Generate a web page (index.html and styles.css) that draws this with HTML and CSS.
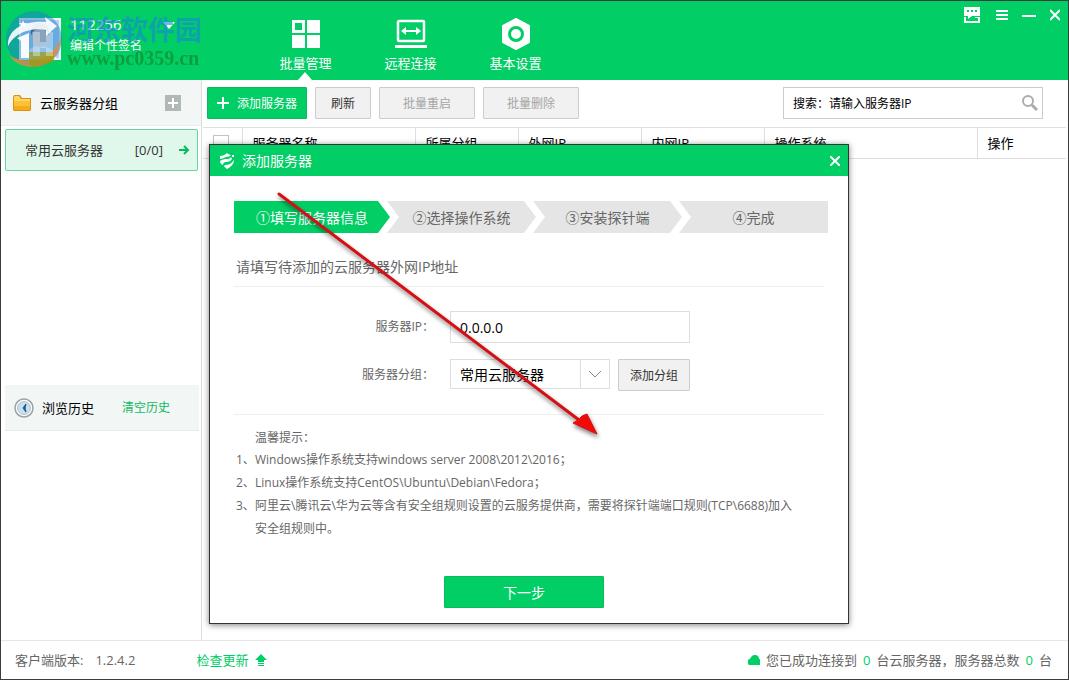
FILE: index.html
```
<!DOCTYPE html>
<html lang="zh-CN">
<head>
  <meta charset="UTF-8" />
  <meta name="viewport" content="width=device-width, initial-scale=1.0" />
  <title>批量管理</title>
  <link rel="stylesheet" href="styles.css">
</head>
<body>
  <div class="app">
    <header class="topbar">
      <div class="user">
        <svg class="avatar" viewBox="0 0 42 42">
          <rect width="42" height="42" fill="#f4f8fb"/>
          <rect x="2" y="2" width="38" height="38" fill="#b9d6ec"/>
          <path d="M6 40c2-9 8-12 15-12s14 3 16 12z" fill="#fff"/>
          <ellipse cx="21" cy="19" rx="8" ry="10" fill="#f2c9a8"/>
          <path d="M12 18c-1-9 3-13 9-13s11 4 9 13c-2-5-4-7-9-7s-8 2-9 7z" fill="#5b4a4a"/>
        </svg>
        <div class="user-text">
          <div class="user-name">112256</div>
          <div class="user-sign">编辑个性签名</div>
        </div>
        <button type="button" class="icon-btn user-more" aria-label="更多">
          <svg width="12" height="8" viewBox="0 0 12 8"><path d="M0 0h12L6 7z" fill="#fff"/></svg>
        </button>
      </div>

      <nav class="nav">
        <a href="#" class="nav-item active">
          <svg width="28" height="28" viewBox="0 0 28 28" fill="#fff">
            <path fill-rule="evenodd" d="M0 0h13v13H0zM3 3v7h7V3z"/>
            <path d="M15 0h13v13H15zM0 15h13v13H0zM15 15h13v13H15z"/>
          </svg>
          <span>批量管理</span>
        </a>
        <a href="#" class="nav-item">
          <svg width="32" height="28" viewBox="0 0 32 28" fill="#fff">
            <rect x="3" y="1" width="26" height="20" rx="1" fill="none" stroke="#fff" stroke-width="2.500"/>
            <path d="M6 11l5-4v3h10V7l5 4-5 4v-3H11v3z"/>
            <path d="M0 25h32v3H0z"/>
          </svg>
          <span>远程连接</span>
        </a>
        <a href="#" class="nav-item">
          <svg width="28" height="32" viewBox="0 0 28 32">
            <path d="M14 1l13 7v16l-13 7-13-7V8z" fill="#fff" stroke="#fff" stroke-width="2" stroke-linejoin="round"/>
            <circle cx="14" cy="16" r="6.500" fill="none" stroke="#01ce65" stroke-width="3"/>
          </svg>
          <span>基本设置</span>
        </a>
      </nav>

      <div class="window-tools">
        <button type="button" class="icon-btn" aria-label="反馈">
          <svg width="16" height="16" viewBox="0 0 16 16" fill="#fff">
            <path fill-rule="evenodd" d="M0 0h16v9H8l-4 3V9H0zM3 3v2h2V3zM7 3v2h2V3zM11 3v2h2V3z"/>
            <path d="M0 10h2v4h12v-3h-3v-1h5v6H0z"/>
          </svg>
        </button>
        <button type="button" class="icon-btn" aria-label="菜单">
          <svg width="12" height="12" viewBox="0 0 12 12" fill="#fff"><path d="M0 1h12v2H0zM0 5h12v2H0zM0 9h12v2H0z"/></svg>
        </button>
        <button type="button" class="icon-btn" aria-label="最小化">
          <svg width="14" height="12" viewBox="0 0 14 12" fill="#fff"><path d="M0 6h14v2H0z"/></svg>
        </button>
        <button type="button" class="icon-btn" aria-label="关闭">
          <svg width="10" height="12" viewBox="0 0 10 12"><path d="M0 1l10 10M10 1L0 11" stroke="#fff" stroke-width="2"/></svg>
        </button>
      </div>
    </header>

    <div class="main">
      <aside class="sidebar">
        <section class="groups">
          <div class="side-head">
            <svg width="18" height="16" viewBox="0 0 18 16">
              <path d="M0 2l1-2h6l2 3h9v12l-1 1H1l-1-1z" fill="#e0900f"/>
              <path d="M1 4V2l1-1h4l2 3h9v2H1z" fill="#ffd765"/>
              <path d="M1 6h16v5H1z" fill="#fcc235"/>
              <path d="M1 11h16v4H1z" fill="#f5ab1a"/>
            </svg>
            <span class="side-title">云服务器分组</span>
            <button type="button" class="icon-btn" aria-label="新建分组">
              <svg width="16" height="16" viewBox="0 0 16 16"><path fill="#b1b9b6" d="M0 0h16v16H0z"/><path d="M8 3v10M3 8h10" stroke="#fff" stroke-width="2"/></svg>
            </button>
          </div>
          <a href="#" class="group-item">
            <span class="group-name">常用云服务器</span>
            <span>[0/0]</span>
            <svg width="11" height="10" viewBox="0 0 11 10"><path d="M0 5h9M5 1l4 4-4 4" fill="none" stroke="#02bd5e" stroke-width="2"/></svg>
          </a>
        </section>
        <section class="history">
          <div class="history-head">
            <svg width="20" height="20" viewBox="0 0 20 20">
              <circle cx="10" cy="10" r="9" fill="#fff" stroke="#9aa2a5" stroke-width="1.500"/>
              <circle cx="10" cy="10" r="6.500" fill="#c5e0f0" stroke="#b2c2ca"/>
              <path d="M12 6l-3 4 3 4-1-4z" fill="#24577c" stroke="#24577c"/>
            </svg>
            <span>浏览历史</span>
            <a href="#" class="history-clear">清空历史</a>
          </div>
        </section>
      </aside>

      <main class="content">
        <div class="toolbar">
          <button type="button" class="btn btn-primary btn-add">
            <svg width="12" height="12" viewBox="0 0 12 12"><path d="M6 0v12M0 6h12" stroke="#fff" stroke-width="2"/></svg>
            添加服务器
          </button>
          <button type="button" class="btn btn-small">刷新</button>
          <button type="button" class="btn btn-wide" disabled>批量重启</button>
          <button type="button" class="btn btn-wide" disabled>批量删除</button>
          <div class="search">
            <input type="text" aria-label="搜索" value="搜索：请输入服务器IP">
            <button type="button" class="icon-btn" aria-label="搜索">
              <svg width="16" height="16" viewBox="0 0 16 16" fill="none" stroke="#a9aeac"><circle cx="6" cy="6" r="5" stroke-width="2"/><path d="M10 10l5 5" stroke-width="3"/></svg>
            </button>
          </div>
        </div>
        <table class="servers">
          <thead>
            <tr>
              <th class="col-check"><input type="checkbox" aria-label="全选"></th>
              <th class="col-name">服务器名称</th>
              <th class="col-group">所属分组</th>
              <th class="col-ip">外网IP</th>
              <th class="col-ip">内网IP</th>
              <th class="col-os">操作系统</th>
              <th>操作</th>
            </tr>
          </thead>
        </table>
      </main>
    </div>

    <footer class="statusbar">
      <span class="version-label">客户端版本:</span>
      <span class="version">1.2.4.2</span>
      <a href="#" class="update">检查更新
        <svg width="12" height="12" viewBox="0 0 12 12" fill="#01ce65"><path d="M6 0l6 6H9v2H3V6H0zM3 9h6v1H3zM3 11h6v1H3z"/></svg>
      </a>
      <div class="connected">
        <svg width="12" height="10" viewBox="0 0 12 10"><path d="M3 10a3 3 0 0 1-1-6C3 2 4 0 7 0s4 2 4 4a3 3 0 0 1-1 6z" fill="#01ce65"/></svg>
        <span>您已成功连接到</span>
        <b>0</b>
        <span>台云服务器，服务器总数</span>
        <b>0</b>
        <span>台</span>
      </div>
    </footer>

    <div class="modal" role="dialog" aria-labelledby="modal-title">
      <div class="modal-head">
        <svg width="16" height="16" viewBox="0 0 16 16" fill="#fff">
          <path d="M1 3c3 0 5-1 7-3 1 1 3 2 4 2-1 1-3 2-5 2-3 1-4 2-6 2z"/>
          <path d="M1 8c2-1 3-2 6-2 2 0 4 0 5-2l1 2c-1 2-3 3-6 3-2 0-3 1-3 3C2 11 1 10 1 8z"/>
          <path d="M6 12c4 0 7-2 9-5 0 4-3 7-7 9-1-1-3-2-3-3z"/>
          <path d="M13 2h2v2h-2z"/>
        </svg>
        <h2 id="modal-title">添加服务器</h2>
        <button type="button" class="icon-btn" aria-label="关闭">
          <svg width="10" height="10" viewBox="0 0 10 10"><path d="M0 0l10 10M10 0L0 10" stroke="#fff" stroke-width="2"/></svg>
        </button>
      </div>
      <form class="modal-body">
        <ol class="steps">
          <li class="current">①填写服务器信息</li>
          <li>②选择操作系统</li>
          <li>③安装探针端</li>
          <li>④完成</li>
        </ol>
        <p class="lead">请填写待添加的云服务器外网IP地址</p>
        <div class="fields">
          <div class="field">
            <label for="ip">服务器IP：</label>
            <input type="text" id="ip" value="0.0.0.0">
          </div>
          <div class="field">
            <label for="group">服务器分组：</label>
            <div class="select">
              <select id="group">
                <option>常用云服务器</option>
              </select>
              <svg viewBox="0 0 29 28"><path d="M0 0v28" stroke="#dedede" stroke-width="2"/><path d="M9 11l6 6 6-6" fill="none" stroke="#888"/></svg>
            </div>
            <button type="button" class="btn btn-group">添加分组</button>
          </div>
        </div>
        <div class="tips">
          <p class="tips-title">温馨提示：</p>
          <p><span>1、</span>Windows操作系统支持windows server 2008\2012\2016；</p>
          <p><span>2、</span>Linux操作系统支持CentOS\Ubuntu\Debian\Fedora；</p>
          <p><span>3、</span>阿里云\腾讯云\华为云等含有安全组规则设置的云服务提供商，需要将探针端端口规则(TCP\6688)加入安全组规则中。</p>
        </div>
        <div class="modal-actions">
          <button type="button" class="btn btn-primary btn-next">下一步</button>
        </div>
      </form>
    </div>

    <svg class="pointer" width="330" height="256" viewBox="0 0 330 256">
      <path d="M4 4L304 230" stroke="#d60f14" stroke-width="3" stroke-linecap="round"/>
      <path d="M322 244l-24-11 5-3 4-4 5-2z" fill="#f40808" stroke="#d60f14"/>
    </svg>

    <div class="watermark">
      <svg width="58" height="58" viewBox="0 0 58 58">
        <circle cx="29" cy="29" r="28" fill="#1b7fd0" opacity=".5"/>
        <path d="M28 57c16 0 28-12 28-30-3 12-14 21-28 23-10 1-19-1-24-5 4 7 13 12 24 12z" fill="#ef8a35" opacity=".75"/>
        <path d="M24 42h25v10l-20 5-5-3z" fill="#9a9a10" opacity=".7"/>
        <path d="M3 36C2 19 20 10 41 12l-1-5 12 9-11 10v-6C24 17 9 24 3 36z" fill="#fff" opacity=".9"/>
        <path d="M12 28l12-5v25h-8V31z" fill="#fff" opacity=".95"/>
        <path d="M28 22h7v10h6V22h7v24h-7v-8h-6v8h-7z" fill="#fff" opacity=".35"/>
        <path d="M18 10l1 3h3l-2 2 1 3-3-2-3 2 1-3-2-2h3z" fill="#fff"/>
      </svg>
      <div class="watermark-text">
        <div class="watermark-name">河东软件园</div>
        <div class="watermark-url">www.pc0359.cn</div>
      </div>
    </div>
  </div>
</body>
</html>
```

FILE: styles.css
```
* {
  box-sizing: border-box;
}

body {
  margin: 0;
  font-family: "Open Sans", "Noto Sans CJK SC", sans-serif;
  font-size: 13px;
  line-height: 20px;
  color: #000;
}

a {
  color: inherit;
  text-decoration: none;
}

svg {
  display: block;
  flex: none;
}

button,
input,
select {
  font-family: inherit;
}

.icon-btn {
  padding: 0;
  border: none;
  background: none;
  cursor: pointer;
}

.app {
  position: relative;
  display: flex;
  flex-direction: column;
  height: 100vh;
  border: 1px solid #3c3c3c;
  background: #fff;
  overflow: hidden;
}

/* top bar */
.topbar {
  display: flex;
  flex: none;
  height: 79px;
  background: #01ce65;
  color: #fff;
}

.user {
  display: flex;
  align-items: flex-start;
  width: 252px;
  padding: 17px 0 0 18px;
}

.avatar {
  width: 42px;
  height: 42px;
}

.user-text {
  width: 102px;
  padding-left: 9px;
}

.user-name {
  font-size: 15px;
  line-height: 12px;
}

.user-sign {
  margin-top: 6px;
  font-size: 12px;
}

.user-more {
  margin-top: 4px;
}

.nav {
  display: flex;
}

.nav-item {
  position: relative;
  display: flex;
  flex-direction: column;
  align-items: center;
  justify-content: flex-end;
  width: 105px;
  padding-bottom: 7px;
}

.nav-item svg {
  height: 32px;
  margin-bottom: 3px;
}

.nav-item.active::after {
  content: "";
  position: absolute;
  bottom: 0;
  left: 45px;
  border: 7px solid transparent;
  border-top: none;
  border-bottom: 8px solid #fff;
}

.window-tools {
  display: flex;
  align-items: center;
  gap: 14px;
  height: 28px;
  margin-left: auto;
  padding-right: 8px;
}

.window-tools .icon-btn:first-child {
  margin-right: 2px;
}

/* side bar */
.main {
  display: flex;
  flex: 1;
  min-height: 0;
}

.sidebar {
  display: flex;
  flex-direction: column;
  width: 201px;
  border-right: 1px solid #dcdfde;
}

.groups {
  flex: 6;
}

.side-head {
  display: flex;
  align-items: center;
  height: 46px;
  padding: 0 20px 0 12px;
  background: #f2f6f5;
  border-bottom: 1px solid #eaeeed;
}

.side-title {
  flex: 1;
  padding-left: 9px;
}

.group-item {
  display: flex;
  align-items: center;
  height: 42px;
  margin: 3px 3px 0 4px;
  padding: 0 7px 0 19px;
  border: 1px solid #6bd39d;
  border-radius: 2px;
  background: #e0f8eb;
  color: #333;
}

.group-item svg {
  margin-left: 16px;
}

.group-name {
  flex: 1;
}

.history {
  flex: 5;
  padding: 0 2px 0 4px;
}

.history-head {
  display: flex;
  align-items: center;
  height: 46px;
  padding-left: 9px;
  background: #f2f6f5;
  border-bottom: 1px solid #e6ebe9;
}

.history-head span {
  margin: 0 28px 0 8px;
}

.history-clear {
  font-size: 12px;
  color: #0fba63;
}

/* content */
.content {
  flex: 1;
  min-width: 0;
}

.toolbar {
  display: flex;
  gap: 8px;
  padding: 7px 25px 8px 5px;
}

.btn {
  height: 32px;
  padding: 0;
  border: 1px solid #ccc;
  border-radius: 1px;
  background: #f1f1f1;
  font-size: 12px;
  color: #333;
  cursor: pointer;
}

.btn:disabled {
  color: #a5a5a5;
}

.btn-primary {
  border-color: #0cb95f;
  background: #01ce65;
  color: #fff;
}

.btn-add {
  display: flex;
  align-items: center;
  justify-content: center;
  gap: 8px;
  width: 100px;
}

.btn-small {
  width: 56px;
}

.btn-wide {
  width: 96px;
}

.search {
  display: flex;
  align-items: center;
  width: 260px;
  height: 32px;
  margin-left: auto;
  padding: 0 4px 0 9px;
  border: 1px solid #ccc;
}

.search input {
  flex: 1;
  min-width: 0;
  padding: 0;
  border: none;
  outline: none;
  font-size: 12px;
}

.servers {
  width: calc(100% - 3px);
  margin-left: 1px;
  border-collapse: collapse;
  table-layout: fixed;
}

.servers th {
  height: 31px;
  padding: 0 0 0 10px;
  border: 1px solid #dfdfdf;
  border-width: 1px 0 1px 1px;
  font-weight: normal;
  text-align: left;
}

.servers .col-check {
  width: 39px;
  border-left: none;
}

.servers input {
  display: block;
  appearance: none;
  width: 16px;
  height: 16px;
  margin: 0;
  border: 1px solid #c4c4c4;
  background: #fff;
}

.col-name {
  width: 173px;
}

.col-group {
  width: 103px;
}

.col-ip {
  width: 123px;
}

.col-os {
  width: 213px;
}

/* status bar */
.statusbar {
  display: flex;
  flex: none;
  align-items: center;
  height: 39px;
  padding: 0 16px 0 14px;
  border-top: 1px solid #e6e6e6;
  color: #666;
}

.version {
  width: 101px;
  margin-left: 12px;
}

.update {
  display: flex;
  align-items: center;
  gap: 7px;
  color: #01ce65;
}

.connected {
  display: flex;
  align-items: center;
  gap: 6px;
  margin-left: auto;
}

.connected b {
  font-weight: normal;
  color: #01ce65;
}

/* add server dialog */
.modal {
  position: absolute;
  top: 143px;
  left: 208px;
  width: 640px;
  border: 1px solid #333;
  background: #fff;
  box-shadow: 0 1px 6px rgba(0, 0, 0, 0.5);
}

.modal-head {
  display: flex;
  align-items: center;
  height: 31px;
  padding: 0 8px 0 9px;
  background: #01ce65;
  color: #fff;
}

.modal-head h2 {
  flex: 1;
  margin: 0 0 0 7px;
  font-size: 14px;
  font-weight: normal;
}

.modal-body {
  padding: 25px 24px 15px;
  color: #666;
}

.steps {
  display: flex;
  margin: 0 -4px 0 0;
  padding: 0;
  list-style: none;
  font-size: 14px;
}

.steps li {
  flex: 1;
  height: 32px;
  margin-left: -3px;
  background: #e5e5e5;
  line-height: 34px;
  text-align: center;
  clip-path: polygon(0 0, calc(100% - 12px) 0, 100% 50%, calc(100% - 12px) 100%, 0 100%, 12px 50%);
}

.steps .current {
  flex: none;
  width: 156px;
  margin-left: 0;
  background: #01ce65;
  color: #fff;
  clip-path: polygon(0 0, calc(100% - 12px) 0, 100% 50%, calc(100% - 12px) 100%, 0 100%);
}

.steps li:last-child {
  clip-path: polygon(0 0, 100% 0, 100% 100%, 0 100%, 12px 50%);
}

.lead {
  margin: 0;
  padding: 24px 2px 9px;
  border-bottom: 1px solid #eee;
  font-size: 14px;
}

.fields {
  padding: 24px 0 23px;
  border-bottom: 1px solid #eee;
}

.field {
  display: flex;
}

.field + .field {
  margin-top: 16px;
}

.field label {
  width: 216px;
  padding-right: 16px;
  font-size: 12px;
  line-height: 31px;
  text-align: right;
}

.field input,
.field select {
  padding: 0 9px;
  border: 1px solid #dedede;
  border-radius: 0;
  background: #fff;
  font-size: 14px;
  color: #000;
}

.field input {
  width: 240px;
  height: 32px;
}

.select {
  position: relative;
  width: 160px;
}

.select select {
  appearance: none;
  width: 100%;
  height: 30px;
}

.select svg {
  position: absolute;
  top: 1px;
  right: 1px;
  width: 29px;
  height: 28px;
  pointer-events: none;
}

.btn-group {
  width: 72px;
  margin-left: 8px;
}

.tips {
  padding: 12px 20px 0 21px;
  font-size: 12px;
  line-height: 23px;
}

.tips p {
  margin: 0;
}

.tips span {
  float: left;
  width: 19px;
  margin-left: -19px;
}

.tips .tips-title {
  line-height: 21px;
}

.modal-actions {
  padding: 36px 10px 0 0;
  text-align: center;
}

.btn-next {
  display: inline-block;
  width: 160px;
  font-size: 14px;
  vertical-align: top;
}

.pointer {
  position: absolute;
  top: 189px;
  left: 274px;
  pointer-events: none;
  filter: drop-shadow(1px 3px 2px rgba(0, 0, 0, 0.5));
}

.watermark {
  position: absolute;
  top: 9px;
  left: 4px;
  display: flex;
  gap: 4px;
  pointer-events: none;
}

.watermark-text {
  opacity: 0.6;
}

.watermark-name {
  font-size: 27px;
  font-weight: bold;
  line-height: 40px;
  color: #1786d8;
}

.watermark-url {
  font-family: "Liberation Serif", serif;
  font-size: 20px;
  font-weight: bold;
  line-height: 16px;
  color: #158024;
}
```
